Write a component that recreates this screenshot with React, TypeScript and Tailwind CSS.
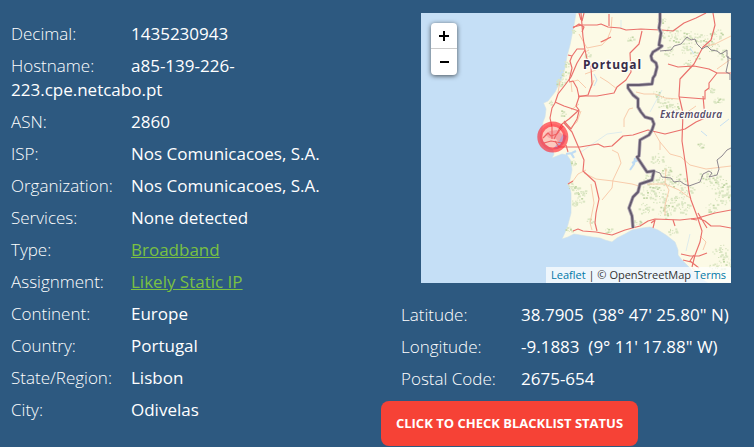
import type { ReactNode } from "react";

type RowData = { label: string; value: ReactNode };

const link = "text-[#7ac142] underline font-normal";

const details: RowData[] = [
  { label: "Decimal:", value: "1435230943" },
  { label: "Hostname:", value: "a85-139-226-223.cpe.netcabo.pt" },
  { label: "ASN:", value: "2860" },
  { label: "ISP:", value: "Nos Comunicacoes, S.A." },
  { label: "Organization:", value: "Nos Comunicacoes, S.A." },
  { label: "Services:", value: "None detected" },
  { label: "Type:", value: <a className={link}>Broadband</a> },
  { label: "Assignment:", value: <a className={link}>Likely Static IP</a> },
  { label: "Continent:", value: "Europe" },
  { label: "Country:", value: "Portugal" },
  { label: "State/Region:", value: "Lisbon" },
  { label: "City:", value: "Odivelas" },
];

const position: RowData[] = [
  { label: "Latitude:", value: "38.7905\u00a0 (38° 47' 25.80\" N)" },
  { label: "Longitude:", value: "-9.1883\u00a0 (9° 11' 17.88\" W)" },
  { label: "Postal Code:", value: "2675-654" },
];

function Row({ label, value }: RowData) {
  return (
    <li className="mb-2">
      <span className="inline-block w-[120px] font-light">{label}</span>
      <span className="font-medium">{value}</span>
    </li>
  );
}

const land =
  "M576 13 L574 25 L570 45 L567 56 L565 68 L562 78 L559 84 L555 92 L548 101 L543.5 103 L546 109 L545 117 L543 122 L541 138 L546 145 L553 150 L554 154 L552 158 L562 154 L567 155 L571 161 L572 170 L569 184 L571 193 L571 213 L567 228 L562 239 L568 237 L574 234 L592 237 L600 238 L605 240 L612 242 L617 238 L625 234 L632 230 L642 228 L650 227 L658 230 L666 235 L675 242 L678 250 L678 255 L682 260 L690 268 L698 277 L708 283 H731 V13 Z";

const roads = [
  "M581 13 L582 25 L583 37 L585 50 L577 63 L571 77 L565 85 L558 94 L555 103 L552 108 L550 118 L552 127 L552 139",
  "M579 13 L581 20 M584 13 L582 21 M573 28 L579 24 L584 27 L582 32",
  "M573 27 L582 25 L597 25 L601 24 L608 27 L620 28 L626 30 L641 29 L660 30",
  "M568 55 L572 56 L577 49 L585 49 M572 56 L570 61 L572 68 L569 81 M569 82 L573 81 L577 88 L579 97 L576 106 L579 110 L569 119 L562 124 L554 139",
  "M555 102 L564 106 L573 109 L579 111 L577 119 L571 129 L564 121",
  "M642 31 L639 44 L630 53 L631 72 L626 80 L617 87 L614 93 L597 96 L587 96 L578 96",
  "M585 50 L587 59 L591 67 L592 84 L588 95 L578 97 M601 42 L611 37",
  "M555 141 L559 147 L580 147 L598 144 L604 147 L612 146 L623 136 L633 135 L648 130 L665 134 L685 129 L696 122 L705 118 L704 107 L703 96",
  "M564 123 L572 132 L578 146 L584 160 L583 171 L595 182 L599 199 L596 213 L595 223 L597 231",
  "M573 231 L578 229 L583 231 L596 232 L612 235 L625 230 L640 226 L648 221 L655 219 L680 220 L698 218 L715 213 L731 210",
  "M662 30 L673 31 L684 23 L696 18 L706 13 M609 14 L609 26",
  "M713 13 L715 25 L711 40 L703 47 L694 64 L680 79 L679 96 L683 113 L682 141 L686 168 L689 192 L691 200 L697 216 L702 231 L700 242 L695 255 L692 267",
  "M668 64 L678 67 L694 66 L709 69 L717 73 L731 73",
  "M717 73 L709 83 L709 88 L705 91 L705 99 L692 98 L679 97",
  "M698 218 L705 221 L711 226 L720 226 L731 228 M698 213 L707 228 M697 220 L691 219 M681 254 L690 256 L699 256 L707 253 M683 260 L691 262 M694 255 L690 261 L699 268 M653 228 L655 220 L651 223 M673 220 L675 226",
  "M566 145 L568 152 M568 184 L573 181",
  "M543 138 L548 133 L551 136 L557 134 L563 126 M544 143 L551 141 L562 143",
];

const minorRoads = [
  "M579 34 L587 48 L602 45 L609 37 M600 42 L607 40 L611 30 L612 17",
  "M572 92 L571 82 L578 80 L586 88 M585 74 L596 70 L600 64",
  "M600 77 L608 82 L617 89 M594 80 L591 88 M585 52 L589 50",
  "M573 181 L578 174 L586 170 M584 173 L596 179 L613 181 L632 184 L639 186",
  "M592 230 L590 223 L594 203 L591 184 M602 200 L612 188 L613 180 L621 163 L618 153 L612 150",
  "M624 127 L624 119 L629 109 L633 108",
  "M636 92 L644 94 L655 94 L665 98 L679 99",
  "M647 184 L665 184 L679 190 L690 198 M665 215 L665 205 L669 190 L665 183 L666 169",
  "M660 142 L670 154 L681 157 L690 165 L706 169 L731 166 M653 130 L660 142 L660 150",
  "M703 47 L715 44 L731 36 M717 69 L731 59 M682 120 L686 113 L696 106",
  "M581 111 L577 122 L570 128 M560 81 L558 93 M579 104 L571 110",
  "M700 236 L706 242 L703 250 M692 268 L702 276 L712 279",
];

const forests: [number, number, number][] = [
  [566, 64, 3], [563, 73, 4], [561, 80, 4], [559, 84, 3], [550, 102, 2], [562, 113, 3], [573, 31, 2], [630, 39, 3],
  [587, 55, 3], [573, 163, 3], [571, 186, 4], [576, 190, 5], [582, 193, 4], [579, 201, 4], [574, 203, 3], [569, 229, 3],
  [590, 220, 3], [661, 20, 4], [669, 33, 7], [680, 37, 7], [692, 38, 7], [703, 40, 7], [712, 46, 6], [722, 54, 5],
  [668, 51, 5], [657, 94, 4], [664, 102, 7], [672, 107, 6], [687, 63, 4], [696, 55, 4], [711, 90, 3], [718, 100, 4],
  [657, 159, 6], [666, 170, 5], [647, 179, 5], [655, 183, 6], [664, 180, 7], [677, 180, 7], [686, 190, 7], [708, 178, 9],
  [718, 184, 9], [726, 190, 8], [722, 199, 7], [647, 192, 7], [659, 196, 8], [668, 205, 7], [676, 200, 6], [665, 212, 6],
  [684, 208, 6], [711, 208, 5], [645, 208, 6], [636, 222, 4], [720, 251, 7], [724, 262, 7], [714, 268, 5],
  [608, 230, 3], [672, 231, 4], [716, 34, 6], [686, 48, 6], [700, 145, 3],
];

// Small repeatable specks scattered inside each wooded patch.
const specks = forests.flatMap(([cx, cy, r], i) =>
  Array.from({ length: Math.round(r * 2.6) }, (_, k) => {
    const angle = (k * 2.39996 + i * 1.3) % 6.283;
    const dist = r * Math.sqrt(((k * 37 + i * 11) % 29) / 29);
    return {
      x: cx + Math.cos(angle) * dist * 1.2,
      y: cy + Math.sin(angle) * dist,
      w: 1 + ((k * 7 + i) % 4) * 0.5,
      dark: (k + i) % 4 === 0,
    };
  }),
);

const nationalBorder =
  "M660 13 L660 22 L659 28 L661 33 L659 45 L662 46 L658 49 L653 52 L651 56 L652 60 L656 63 L657 67 L655 75 L653 78 L652 84 L639 85 L628 85 L628 88 L633 95 L638 99 L638 107 L641 112 L645 117 L652 119 L654 124 L652 130 L649 135 L640 140 L639 156 L637 157 L647 172 L654 171 L652 180 L640 184 L638 192 L633 197 L629 208 L632 216 L633 228";

function MapDrawing() {
  return (
    <svg className="block h-full w-full" viewBox="421 13 310 270">
      <rect x="421" y="13" width="310" height="270" fill="#c5dff6" />
      <path d={land} fill="#fcfae6" stroke="#cfe0ea" strokeWidth="0.6" />
      <path d="M545 134 L550 131 L557 130 L562 134 L564 140 L560 144 L556 139 L549 138Z" fill="#f3c9c4" />
      <path d="M553 149 L558 143 L563 134 L567 136 L564 143 L558 149Z" fill="#b4c4ee" />
      {specks.map((s, i) => (
        <rect key={i} x={s.x} y={s.y} width={s.w} height={s.w * 0.8} fill={s.dark ? "#c0d5a4" : "#dbe6c3"} />
      ))}
      <g fill="none" stroke="#bfdcf3" strokeWidth="1">
        <path d="M566 154 L572 153 L576 151 M571 153 L574 158" strokeWidth="2.2" />
        <path d="M635 158 L634 164 L630 170 M638 160 L632 163" strokeWidth="2" />
        <path d="M594 74 L597 80 L594 86 M720 126 L729 119 M690 48 L694 54 M701 131 L707 136" strokeWidth="0.9" />
        <path d="M581 152 L607 134 L622 132 M690 234 L686 251 M621 20 L621 28 M650 112 L662 90" strokeWidth="0.5" />
      </g>
      <g fill="none" stroke="#f7c6a5" strokeWidth="0.9" strokeLinejoin="round">
        {minorRoads.map((d) => (
          <path key={d} d={d} />
        ))}
      </g>
      <g fill="none" stroke="#ea706b" strokeWidth="1.15" strokeLinejoin="round">
        {roads.map((d) => (
          <path key={d} d={d} />
        ))}
      </g>
      <path
        d="M660 51 L671 50 L674 46 L681 44 L687 37 L691 40 L695 39 L697 44 L702 49 L707 46 L711 50 L717 51 L721 54 L727 50 L727 57 L731 59 M728 56 L728 63 L726 72 L730 74 L730 80 M654 171 L660 173 L662 177 L671 178 L674 182 L680 181 L684 184 L689 186 L700 182 L703 174 L709 171 L712 173 L709 177 L717 175 L719 169 L717 160 L722 156 L727 150 L731 148"
        fill="none"
        stroke="#817a86"
        strokeWidth="0.9"
        strokeLinejoin="round"
      />
      <g fill="none" strokeLinejoin="round">
        <path d={nationalBorder} stroke="#b4abb5" strokeWidth="3.6" />
        <path d={nationalBorder} stroke="#655b6f" strokeWidth="2" />
      </g>
      <g fontFamily="'Noto Sans', sans-serif" fill="#372c49" stroke="#fffdf5" strokeWidth="2.5" paintOrder="stroke">
        <text x="583" y="68.5" fontSize="12" fontWeight="700" textLength="58">Portugal</text>
        <text x="660" y="118" fontSize="10" fontWeight="600" fontStyle="italic" textLength="62" fill="#554b68">Extremadura</text>
      </g>
      <circle cx="552.8" cy="137" r="13" fill="#ff3344" fillOpacity="0.24" stroke="#ff2831" strokeWidth="5" strokeOpacity="0.65" />
    </svg>
  );
}

function ZoomControl() {
  return (
    <div className="absolute left-[10px] top-[10px] w-[26px] overflow-hidden rounded-[4px] bg-white text-black shadow-[0_1px_5px_rgba(0,0,0,0.65)]">
      <button className="flex h-[26px] w-full items-center justify-center border-b border-[#cccccc]">
        <svg className="h-[10px] w-[10px]" viewBox="0 0 10 10"><path d="M0 5H10M5 0V10" stroke="currentColor" strokeWidth="2" /></svg>
      </button>
      <button className="flex h-[26px] w-full items-center justify-center">
        <svg className="h-[10px] w-[10px]" viewBox="0 0 10 10"><path d="M1 5H10" stroke="currentColor" strokeWidth="2" /></svg>
      </button>
    </div>
  );
}

export default function App() {
  return (
    <main className="flex h-[447px] w-[754px] overflow-hidden bg-[#2d5980] font-['Open_Sans',sans-serif] text-[17px] leading-6 text-white">
      <ul className="w-[370px] pl-[11px] pr-[40px] pt-[22px]">
        {details.map((row) => (
          <Row key={row.label} {...row} />
        ))}
      </ul>
      <section className="w-[384px] pt-[13px]">
        <div className="relative ml-[51px] h-[270px] w-[310px]">
          <MapDrawing />
          <ZoomControl />
          <div className="absolute bottom-0 right-0 h-4 w-[185px] whitespace-nowrap bg-white/70 px-[5px] text-[11px] leading-4 text-[#333333]">
            <a className="text-[#0078a8]">Leaflet</a> | © OpenStreetMap <a className="text-[#0078a8]">Terms</a>
          </div>
        </div>
        <ul className="ml-[31px] mt-5 whitespace-nowrap">
          {position.map((row) => (
            <Row key={row.label} {...row} />
          ))}
        </ul>
        <button className="ml-[11px] mt-2.5 block h-[45px] w-[257px] rounded-[8px] bg-[#f64236] pb-px text-[13px] font-bold">
          CLICK TO CHECK BLACKLIST STATUS
        </button>
      </section>
    </main>
  );
}
